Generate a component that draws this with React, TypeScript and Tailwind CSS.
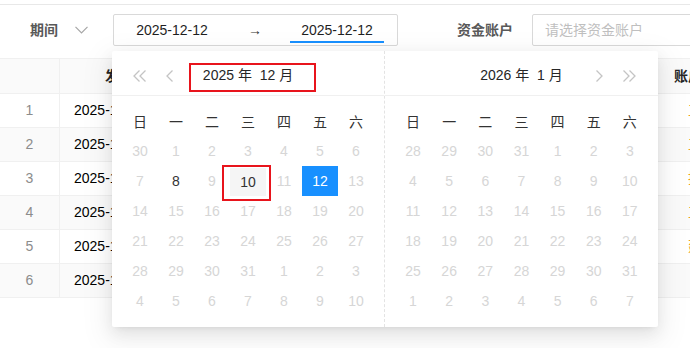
import React from 'react'

const FONT = { fontFamily: '"Liberation Sans", "Noto Sans CJK SC", sans-serif' }

const WEEK = ['日', '一', '二', '三', '四', '五', '六']

const DEC_2025 = [
  [30, 1, 2, 3, 4, 5, 6],
  [7, 8, 9, 10, 11, 12, 13],
  [14, 15, 16, 17, 18, 19, 20],
  [21, 22, 23, 24, 25, 26, 27],
  [28, 29, 30, 31, 1, 2, 3],
  [4, 5, 6, 7, 8, 9, 10],
]

const JAN_2026 = [
  [28, 29, 30, 31, 1, 2, 3],
  [4, 5, 6, 7, 8, 9, 10],
  [11, 12, 13, 14, 15, 16, 17],
  [18, 19, 20, 21, 22, 23, 24],
  [25, 26, 27, 28, 29, 30, 31],
  [1, 2, 3, 4, 5, 6, 7],
]

const ROWS = [
  { no: 1, date: '2025-12-02', acct: '工商银行' },
  { no: 2, date: '2025-12-03', acct: '工商银行' },
  { no: 3, date: '2025-12-05', acct: '招商银行' },
  { no: 4, date: '2025-12-08', acct: '工商银行' },
  { no: 5, date: '2025-12-10', acct: '建设银行' },
  { no: 6, date: '2025-12-12', acct: '' },
]

function DoubleLeft() {
  return (
    <svg width="14" height="12" viewBox="0 0 14 12" fill="none" stroke="#c4c4c4" strokeWidth="1.3">
      <polyline points="6.5,0.5 1,6 6.5,11.5" />
      <polyline points="12.5,0.5 7,6 12.5,11.5" />
    </svg>
  )
}

function DoubleRight() {
  return (
    <svg width="14" height="12" viewBox="0 0 14 12" fill="none" stroke="#c4c4c4" strokeWidth="1.3">
      <polyline points="1.5,0.5 7,6 1.5,11.5" />
      <polyline points="7.5,0.5 13,6 7.5,11.5" />
    </svg>
  )
}

function SingleLeft() {
  return (
    <svg width="7" height="12" viewBox="0 0 7 12" fill="none" stroke="#c4c4c4" strokeWidth="1.3">
      <polyline points="6.5,0.5 1,6 6.5,11.5" />
    </svg>
  )
}

function SingleRight() {
  return (
    <svg width="7" height="12" viewBox="0 0 7 12" fill="none" stroke="#c4c4c4" strokeWidth="1.3">
      <polyline points="0.5,0.5 6,6 0.5,11.5" />
    </svg>
  )
}

function DayCell({ day, kind }: { day: number; kind: 'off' | 'on' | 'hover' | 'picked' }) {
  if (kind === 'picked') {
    return <div className="w-[36px] h-[30px] flex items-center justify-center bg-[#1890ff] text-white">{day}</div>
  }
  if (kind === 'hover') {
    return (
      <div className="w-[36px] h-[30px] flex items-center justify-center">
        <div className="w-[36px] h-[28px] mt-[2px] flex items-center justify-center bg-[#f5f5f5] text-[#333]">{day}</div>
      </div>
    )
  }
  return (
    <div className={`w-[36px] h-[30px] flex items-center justify-center ${kind === 'on' ? 'text-[#333]' : 'text-[#d6d6d6]'}`}>
      {day}
    </div>
  )
}

function MonthGrid({ weeks, mark }: { weeks: number[][]; mark?: boolean }) {
  return (
    <div className="px-[10px] pt-[12px] pb-[10px]">
      <div className="grid grid-cols-7 h-[28px] items-center text-[#333]">
        {WEEK.map((w) => (
          <div key={w} className="w-[36px] text-center">{w}</div>
        ))}
      </div>
      {weeks.map((week, r) => (
        <div key={r} className="grid grid-cols-7">
          {week.map((d, c) => {
            let kind: 'off' | 'on' | 'hover' | 'picked' = 'off'
            if (mark && r === 1 && d === 8) kind = 'on'
            if (mark && r === 1 && d === 10) kind = 'hover'
            if (mark && r === 1 && d === 12) kind = 'picked'
            return <DayCell key={c} day={d} kind={kind} />
          })}
        </div>
      ))}
    </div>
  )
}

function RangePopup() {
  return (
    <div className="absolute left-[112px] top-[51px] w-[546px] h-[276px] bg-white rounded-[2px] shadow-[0_3px_6px_-4px_rgba(0,0,0,0.12),0_6px_16px_0_rgba(0,0,0,0.08),0_9px_28px_8px_rgba(0,0,0,0.05)] flex text-[14px] text-[#262626]">
      <div className="w-[272px] shrink-0 flex flex-col">
        <div className="h-[45px] pt-[5px] border-b border-[#f0f0f0] grid grid-cols-[70px_1fr_70px] items-center">
          <div className="flex items-center pl-[21px] gap-[19px]">
            <DoubleLeft />
            <SingleLeft />
          </div>
          <div className="text-center whitespace-pre">2025 年  12 月</div>
          <div />
        </div>
        <MonthGrid weeks={DEC_2025} mark />
      </div>
      <div className="w-[274px] shrink-0 flex flex-col border-l border-dashed border-[#e3e3e3]">
        <div className="h-[45px] pt-[5px] border-b border-[#f0f0f0] grid grid-cols-[70px_1fr_70px] items-center">
          <div />
          <div className="text-center whitespace-pre">2026 年  1 月</div>
          <div className="flex items-center justify-end pr-[22px] gap-[19px]">
            <SingleRight />
            <DoubleRight />
          </div>
        </div>
        <MonthGrid weeks={JAN_2026} />
      </div>
      {/* annotation boxes */}
      <div className="absolute left-[77px] top-[12px] w-[127px] h-[29px] border-2 border-[#e8141c]" />
      <div className="absolute left-[110px] top-[114px] w-[49px] h-[36px] border-2 border-[#e8141c]" />
    </div>
  )
}

export default function App() {
  return (
    <div className="relative w-[690px] h-[348px] overflow-hidden bg-white text-[14px]" style={FONT}>
      <div className="h-[5px] border-b border-[#e8e8e8]" />

      <div className="mt-[9px] h-[32px] w-[900px] flex items-center pl-[30px] whitespace-nowrap">
        <span className="shrink-0 font-bold text-[#595959]">期间</span>
        <svg className="ml-[17px] shrink-0" width="13" height="8" viewBox="0 0 13 8" fill="none" stroke="#a6a6a6" strokeWidth="1.2">
          <polyline points="0.5,0.8 6.5,6.8 12.5,0.8" />
        </svg>
        <div className="ml-[25px] shrink-0 w-[285px] h-[32px] border border-[#d9d9d9] rounded-[2px] flex items-center pl-[10px] text-[#1f1f1f]">
          <div className="w-[96px] text-center">2025-12-12</div>
          <div className="w-[70px] text-center text-[#333]">→</div>
          <div className="relative w-[94px] h-full flex items-center justify-center">
            2025-12-12
            <div className="absolute left-0 right-0 bottom-[2px] h-[2px] bg-[#1890ff]" />
          </div>
        </div>
        <span className="ml-[59px] shrink-0 font-bold text-[#595959]">资金账户</span>
        <div className="ml-[19px] shrink-0 w-[200px] h-[32px] border border-[#d9d9d9] rounded-[2px] flex items-center pl-[12px] text-[#bfbfbf]">
          请选择资金账户
        </div>
      </div>

      <div className="mt-[12px] w-[900px] border-t border-[#f0f0f0]">
        <div className="flex h-[35px] bg-[#fafafa] border-b border-[#f0f0f0] font-bold text-[#262626] whitespace-nowrap">
          <div className="w-[60px] shrink-0 border-r border-[#f0f0f0]" />
          <div className="w-[160px] shrink-0 border-r border-[#f0f0f0] flex items-center pl-[45px]">发生日期</div>
          <div className="w-[430px] shrink-0 border-r border-[#f0f0f0] flex items-center justify-center">摘要</div>
          <div className="w-[200px] shrink-0 flex items-center pl-[24px]">账户名称</div>
        </div>
        {ROWS.map((row) => (
          <div key={row.no} className={`flex h-[34px] border-b border-[#f0f0f0] whitespace-nowrap ${row.no % 2 === 0 ? 'bg-[#fafafa]' : 'bg-white'}`}>
            <div className="w-[60px] shrink-0 border-r border-[#f0f0f0] flex items-center justify-center text-[#8c8c8c]">{row.no}</div>
            <div className="w-[160px] shrink-0 border-r border-[#f0f0f0] flex items-center pl-[14px] text-black">{row.date}</div>
            <div className="w-[430px] shrink-0 border-r border-[#f0f0f0]" />
            <div className="w-[200px] shrink-0 flex items-center pl-[38px] text-[#f0a020]">{row.acct}</div>
          </div>
        ))}
      </div>

      <RangePopup />
    </div>
  )
}
